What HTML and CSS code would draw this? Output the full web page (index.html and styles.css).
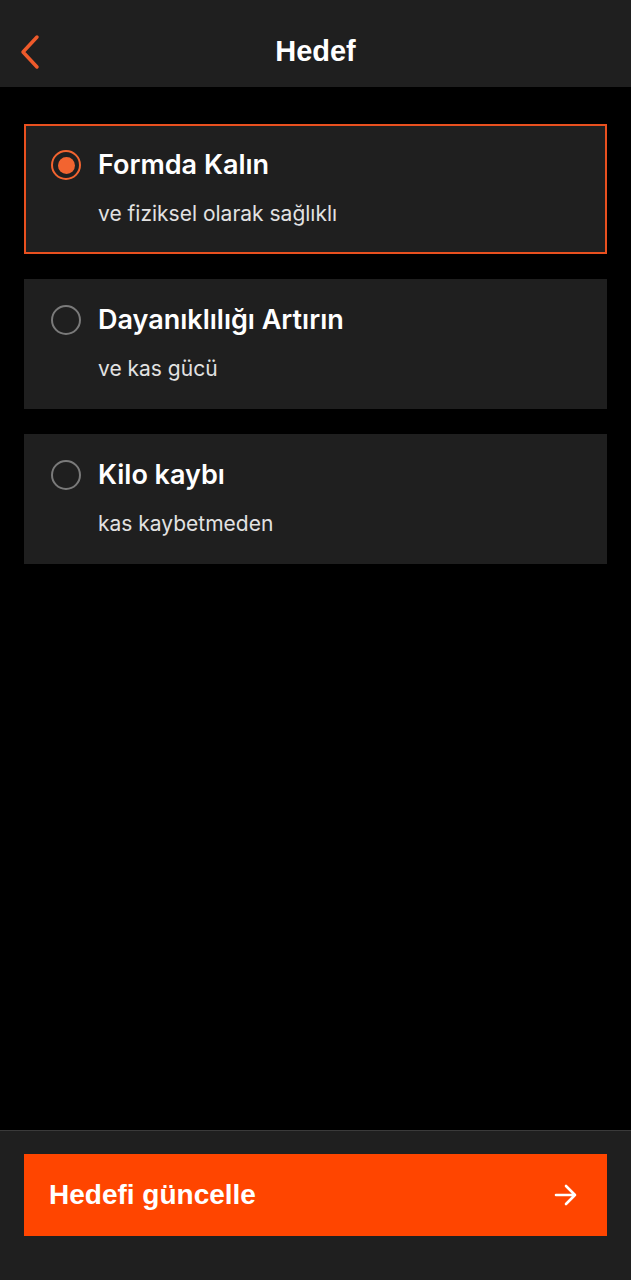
FILE: index.html
```html
<!DOCTYPE html>
<html lang="tr">
<head>
    <meta charset="UTF-8">
    <meta name="viewport" content="width=device-width, initial-scale=1.0">
    <title>Hedef</title>
    <link rel="stylesheet" href="styles.css">
</head>
<body>
    <div class="page">
        <header class="topbar">
            <button class="back" aria-label="Geri">
                <svg width="24" height="36" viewBox="0 0 24 36">
                    <path d="M19 3 L5 18 L19 33" fill="none" stroke="#ee5a2b" stroke-width="3.5" stroke-linecap="round" stroke-linejoin="round"/>
                </svg>
            </button>
            <h1>Hedef</h1>
        </header>

        <main class="goals">
            <label class="goal selected">
                <span class="radio"></span>
                <span class="goal-title">Formda Kalın</span>
                <span class="goal-sub">ve fiziksel olarak sağlıklı</span>
            </label>
            <label class="goal">
                <span class="radio"></span>
                <span class="goal-title">Dayanıklılığı Artırın</span>
                <span class="goal-sub">ve kas gücü</span>
            </label>
            <label class="goal">
                <span class="radio"></span>
                <span class="goal-title">Kilo kaybı</span>
                <span class="goal-sub">kas kaybetmeden</span>
            </label>
        </main>

        <footer class="bottom">
            <button class="update">
                <span>Hedefi güncelle</span>
                <svg width="26" height="26" viewBox="0 0 26 26">
                    <path d="M3 13 H22 M13 4 L22 13 L13 22" fill="none" stroke="#fff" stroke-width="2.6" stroke-linecap="round" stroke-linejoin="round"/>
                </svg>
            </button>
        </footer>
    </div>
</body>
</html>
```

FILE: styles.css
```css
body {
    margin: 0;
    background-color: #000;
    font-family: Inter, "Noto Sans", sans-serif;
    color: #fff;
}
.page {
    display: flex;
    flex-direction: column;
    min-height: 100vh;
}
.topbar {
    height: 87px;
    box-sizing: border-box;
    padding-top: 16px;
    background-color: #1f1f1f;
    display: flex;
    align-items: center;
    justify-content: center;
    position: relative;
}
.topbar h1 {
    margin: 0;
    font-family: "Liberation Sans", Arial, sans-serif;
    font-weight: bold;
    font-size: 29px;
}
.back {
    position: absolute;
    left: 18px;
    top: 34px;
    background: none;
    border: none;
    padding: 0;
    cursor: pointer;
}
.goals {
    padding: 37px 24px 0;
    display: flex;
    flex-direction: column;
    gap: 25px;
}
.goal {
    display: grid;
    grid-template-columns: 30px 1fr;
    column-gap: 17px;
    row-gap: 22px;
    align-items: center;
    align-content: start;
    height: 130px;
    box-sizing: border-box;
    padding: 24px 20px 0 25px;
    background-color: #1f1f1f;
    border: 2px solid transparent;
    cursor: pointer;
}
.goal.selected {
    border-color: #e9501f;
}
.radio {
    width: 30px;
    height: 30px;
    box-sizing: border-box;
    border: 2.5px solid #7a7a7a;
    border-radius: 50%;
    display: flex;
    align-items: center;
    justify-content: center;
}
.selected .radio {
    border-color: #f26430;
}
.selected .radio::after {
    content: "";
    width: 17px;
    height: 17px;
    border-radius: 50%;
    background-color: #f26430;
}
.goal-title {
    font-size: 27px;
    font-weight: 600;
    line-height: 30px;
}
.goal-sub {
    grid-column: 2;
    font-size: 21px;
    line-height: 24px;
    color: #e2e2e2;
}
.bottom {
    margin-top: auto;
    background-color: #1f1f1f;
    border-top: 1px solid #3a3a3a;
    padding: 23px 24px 44px;
}
.update {
    width: 100%;
    height: 82px;
    display: flex;
    align-items: center;
    justify-content: space-between;
    padding: 0 28px 0 25px;
    background-color: #ff4500;
    border: none;
    color: #fff;
    font-family: "Liberation Sans", Arial, sans-serif;
    font-weight: bold;
    font-size: 28px;
    cursor: pointer;
}
```
